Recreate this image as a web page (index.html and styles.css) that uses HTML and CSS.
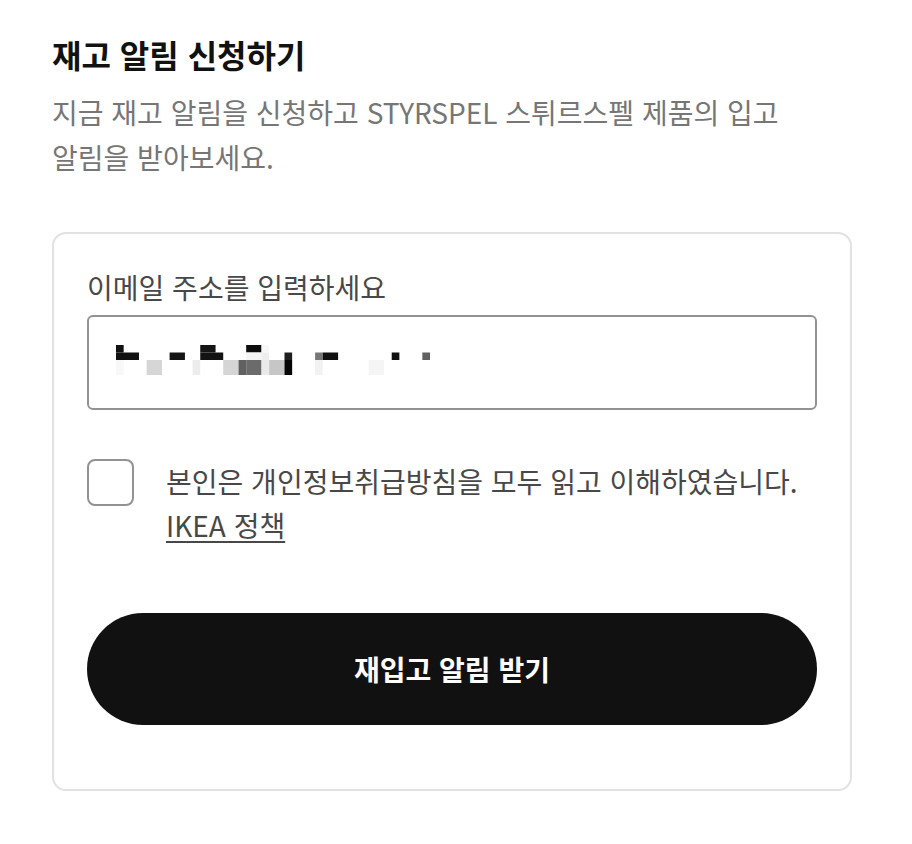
FILE: index.html
```html
<!DOCTYPE html>
<html lang="ko">
<head>
    <meta charset="UTF-8">
    <meta name="viewport" content="width=device-width, initial-scale=1.0">
    <title>재고 알림 신청하기</title>
    <link rel="stylesheet" href="styles.css">
</head>
<body>
    <div class="page">
        <h1 class="title">재고 알림 신청하기</h1>
        <p class="intro">지금 재고 알림을 신청하고 STYRSPEL 스튀르스펠 제품의 입고 알림을 받아보세요.</p>

        <form class="card">
            <label class="field-label" for="email">이메일 주소를 입력하세요</label>
            <div class="input-box">
                <!-- 가려진 이메일 주소 -->
                <svg class="masked" width="314" height="30" viewBox="0 0 41 4" preserveAspectRatio="none">
                    <rect x="0" y="0" width="1" height="1" fill="#111"/>
                    <rect x="11" y="0" width="2" height="1" fill="#151515"/>
                    <rect x="17" y="0" width="2" height="1" fill="#0d0d0d"/>
                    <rect x="19" y="0" width="1" height="1" fill="#f7f7f7"/>
                    <rect x="0" y="1" width="3" height="1" fill="#111"/>
                    <rect x="7" y="1" width="2" height="1" fill="#141414"/>
                    <rect x="11" y="1" width="3" height="1" fill="#131313"/>
                    <rect x="17" y="1" width="2" height="1" fill="#f4f4f4"/>
                    <rect x="19" y="1" width="1" height="1" fill="#eee"/>
                    <rect x="22" y="1" width="1" height="1" fill="#1e1e1e"/>
                    <rect x="26" y="1" width="1" height="1" fill="#777"/>
                    <rect x="27" y="1" width="2" height="1" fill="#111"/>
                    <rect x="36" y="1" width="1" height="1" fill="#111"/>
                    <rect x="40" y="1" width="1" height="1" fill="#616161"/>
                    <rect x="0" y="2" width="1" height="2" fill="#f8f8f8"/>
                    <rect x="4" y="2" width="2" height="2" fill="#d6d6d6"/>
                    <rect x="10" y="2" width="1" height="2" fill="#ececec"/>
                    <rect x="14" y="2" width="2" height="2" fill="#d5d5d5"/>
                    <rect x="16" y="2" width="1" height="2" fill="#616161"/>
                    <rect x="17" y="2" width="2" height="2" fill="#6b6b6b"/>
                    <rect x="19" y="2" width="1" height="2" fill="#eaeaea"/>
                    <rect x="20" y="2" width="2" height="2" fill="#c6c6c6"/>
                    <rect x="22" y="2" width="1" height="2" fill="#050505"/>
                    <rect x="26" y="2" width="1" height="2" fill="#f2f2f2"/>
                    <rect x="33" y="2" width="2" height="2" fill="#f5f5f5"/>
                </svg>
            </div>

            <div class="agree">
                <span class="checkbox"></span>
                <p class="agree-text">본인은 개인정보취급방침을 모두 읽고 이해하였습니다. <a href="#" class="policy">IKEA 정책</a></p>
            </div>

            <button type="button" class="submit">재입고 알림 받기</button>
        </form>
    </div>
</body>
</html>
```

FILE: styles.css
```css
body {
    font-family: "Noto Sans CJK KR", "Noto Sans", sans-serif;
    margin: 0;
    background-color: #fff;
    color: #111;
}
.page {
    padding: 30px 0 40px 52px;
}
.title {
    font-size: 32px;
    font-weight: bold;
    line-height: 48px;
    margin: 0;
    color: #111;
}
.intro {
    font-size: 28px;
    line-height: 45px;
    color: #767676;
    margin: 12px 0 0 0;
    width: 760px;
}
.card {
    width: 800px;
    box-sizing: border-box;
    margin-top: 52px;
    padding: 31px 33px 64px 33px;
    border: 2px solid #e2e2e2;
    border-radius: 14px;
}
.field-label {
    display: block;
    font-size: 28px;
    line-height: 44px;
    color: #484848;
}
.input-box {
    margin-top: 6px;
    height: 95px;
    box-sizing: border-box;
    border: 2px solid #929292;
    border-radius: 6px;
    padding: 28px 0 0 27px;
}
.masked {
    display: block;
}
.agree {
    display: flex;
    align-items: flex-start;
    gap: 32px;
    margin-top: 49px;
}
.checkbox {
    flex: none;
    width: 47px;
    height: 47px;
    box-sizing: border-box;
    border: 2px solid #929292;
    border-radius: 8px;
}
.agree-text {
    margin: 0;
    font-size: 28px;
    line-height: 44px;
    color: #484848;
}
.policy {
    color: #484848;
    text-decoration: underline;
    text-underline-offset: 4px;
}
.submit {
    display: block;
    width: 100%;
    height: 112px;
    margin-top: 66px;
    border: none;
    border-radius: 56px;
    background-color: #111;
    color: #fff;
    font-family: inherit;
    font-size: 28px;
    font-weight: bold;
    cursor: pointer;
}
```
